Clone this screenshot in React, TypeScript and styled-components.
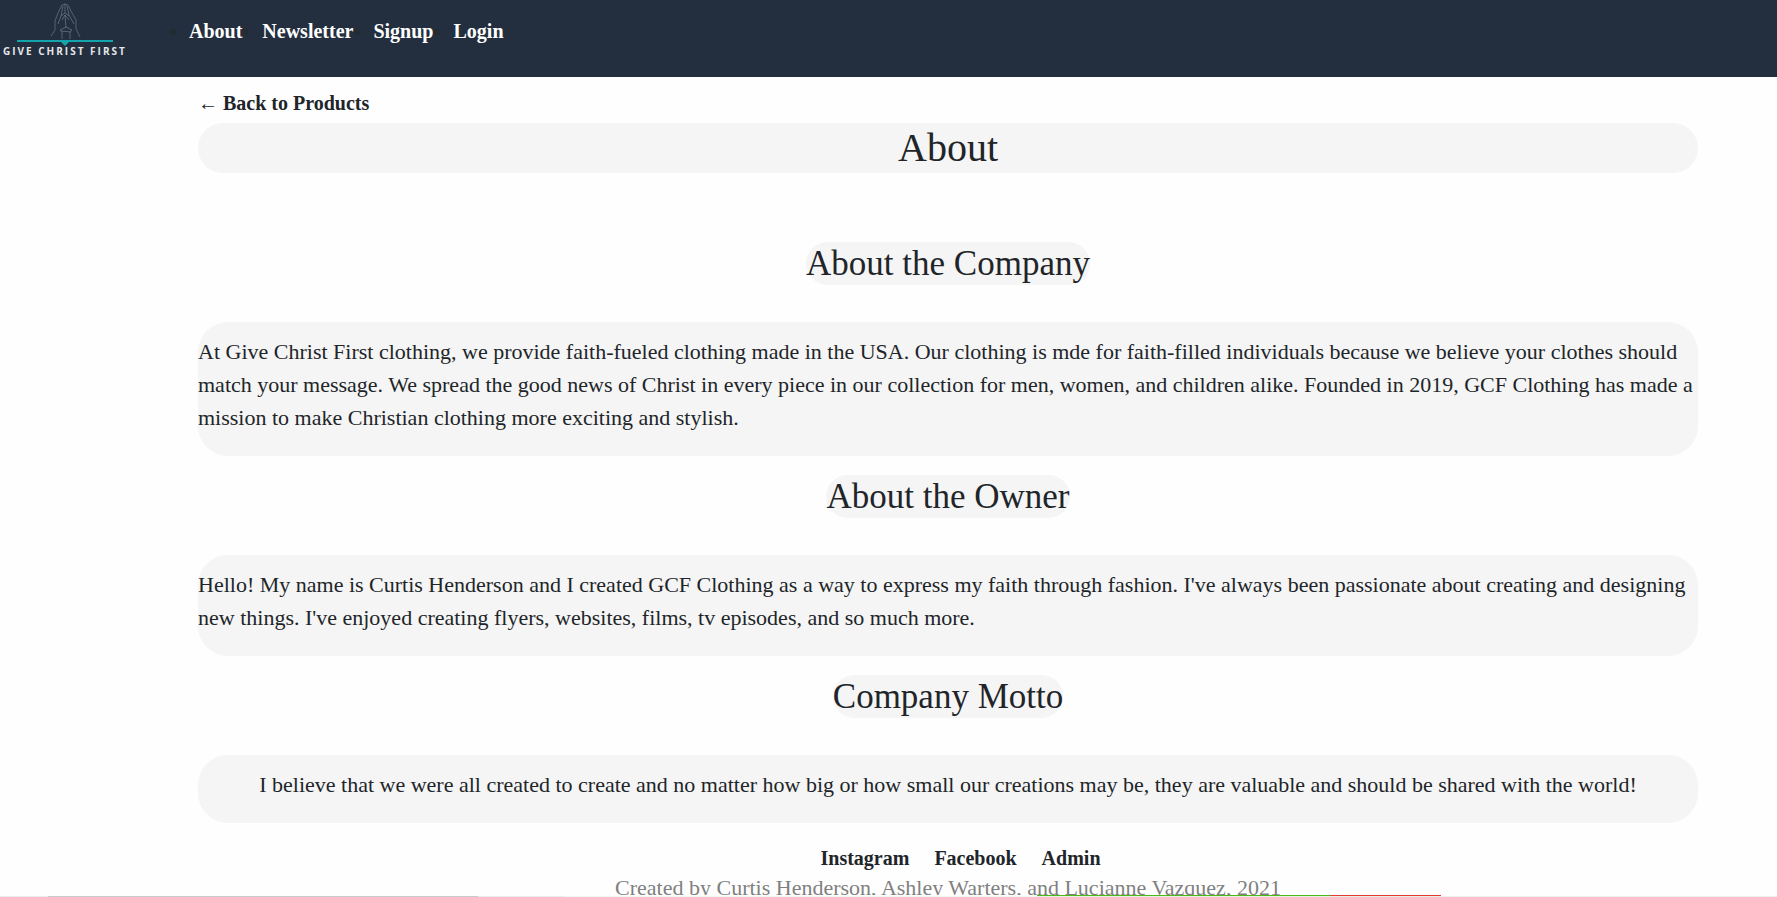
import React from "react";
import styled, { createGlobalStyle } from "styled-components";

const GlobalStyle = createGlobalStyle`
  *, *::before, *::after { box-sizing: border-box; }
  html { overflow: hidden; }
  body {
    margin: 0;
    background: #fefefe;
    color: #212529;
    font: 22px/33px "Liberation Serif", "Times New Roman", serif;
  }
`;

const Header = styled.header`
  display: flex;
  align-items: flex-start;
  height: 77px;
  background: #232f3e;
`;

const LogoLink = styled.a`
  display: block;
  width: 132px;
  height: 60px;
  flex: none;
`;

const NavList = styled.ul`
  display: flex;
  gap: 20px;
  margin: 0;
  padding: 16px 0 0 57px;
  font-size: 20px;
  line-height: 30px;

  li::marker {
    color: #242b32;
  }
`;

const TextLink = styled.a<{ $light?: boolean }>`
  color: ${({ $light }) => ($light ? "#ffffff" : "#212529")};
  font-size: 20px;
  line-height: 30px;
  font-weight: 700;
  text-decoration: none;
`;

const Arrow = styled.span`
  font-weight: 400;
`;

const Main = styled.main`
  display: flex;
  flex-direction: column;
  align-items: center;
  padding: 10px 79px 0 198px;
`;

const BackRow = styled.div`
  align-self: stretch;
  font-size: 20px;
  line-height: 33px;
  padding-bottom: 3px;
`;

const PageTitle = styled.h1`
  align-self: stretch;
  margin: 0 0 69px;
  border-radius: 25px;
  background: #f5f5f5;
  font-size: 40px;
  line-height: 50px;
  font-weight: 400;
  text-align: center;
`;

const SectionTitle = styled.h2`
  margin: 0 0 37px;
  border-radius: 25px;
  background: #f5f5f5;
  font-size: 35px;
  line-height: 43px;
  font-weight: 400;
`;

const Panel = styled.p<{ $centered?: boolean }>`
  align-self: stretch;
  margin: 0 0 19px;
  padding: 13px 0 22px;
  border-radius: 30px;
  background: #f5f5f5;
  text-align: ${({ $centered }) => ($centered ? "center" : "left")};
`;

const Footer = styled.footer`
  display: flex;
  flex-direction: column;
  align-items: center;
  padding: 1px 79px 0 198px;
`;

const FooterLinks = styled.nav`
  display: flex;
  gap: 25px;
  height: 28px;
  padding-left: 25px;
`;

const Credit = styled.p`
  margin: 0;
  color: #808080;
`;

const BottomStrip = styled.div`
  position: fixed;
  inset: auto 0 0;
  height: 2px;
  display: flex;
  align-items: flex-end;
  background: #fefefe;
`;

const StripPart = styled.span<{ $size: number; $color: string; $tall?: boolean }>`
  flex: ${({ $size }) => $size} 1 0;
  height: ${({ $tall }) => ($tall ? 2 : 1)}px;
  background: ${({ $color, $tall }) =>
    $tall ? `linear-gradient(${$color} 50%, #e6f0e2 50%)` : $color};
`;

const Logo = () => (
  <svg width="132" height="60" viewBox="0 0 132 60" role="img" aria-label="Give Christ First">
    <g fill="none" stroke="#8a939c" strokeWidth="0.7" opacity="0.75">
      <path d="M51 36 L55 30 L55 21 L58 13 L62 5 L65 4 L68 5 L72 13 L76 20 L76 29 L80 37" />
      <path d="M65 4 L65 13 M63 6 L61 16 L58 24 M67 6 L69 15 L74 24 M61 16 L65 13 L69 16 M62 20 L65 15 L69 20 M65 15 L66 28" />
      <path d="M62 39 L62 32 L60 30 L66 27 L72 30 L70 32 L70 39 M61 31 L71 32" />
    </g>
    <path d="M17 40H113V42H69L65 46L61 42H17Z" fill="#12a5ae" />
    <text x="3" y="55" fill="#e3e6e9" fontFamily="Open Sans, sans-serif" fontSize="10" fontWeight="700" letterSpacing="2">
      GIVE CHRIST FIRST
    </text>
  </svg>
);

const navItems = ["About", "Newsletter", "Signup", "Login"];
const footerItems = ["Instagram", "Facebook", "Admin"];

const sections = [
  {
    title: "About the Company",
    text: "At Give Christ First clothing, we provide faith-fueled clothing made in the USA. Our clothing is mde for faith-filled individuals because we believe your clothes should match your message. We spread the good news of Christ in every piece in our collection for men, women, and children alike. Founded in 2019, GCF Clothing has made a mission to make Christian clothing more exciting and stylish.",
  },
  {
    title: "About the Owner",
    text: "Hello! My name is Curtis Henderson and I created GCF Clothing as a way to express my faith through fashion. I've always been passionate about creating and designing new things. I've enjoyed creating flyers, websites, films, tv episodes, and so much more.",
  },
  {
    title: "Company Motto",
    text: "I believe that we were all created to create and no matter how big or how small our creations may be, they are valuable and should be shared with the world!",
    centered: true,
  },
];

const strip = [
  { size: 48, color: "#ebebeb" },
  { size: 430, color: "#c9c9c9" },
  { size: 86, color: "#ebebeb" },
  { size: 473, color: "#f3f5f2" },
  { size: 293, color: "#4bb816", tall: true },
  { size: 111, color: "#e23b32", tall: true },
  { size: 336, color: "#f1efee" },
];

export default function App() {
  return (
    <>
      <GlobalStyle />
      <Header>
        <LogoLink href="#home">
          <Logo />
        </LogoLink>
        <nav aria-label="Main">
          <NavList>
            {navItems.map((item) => (
              <li key={item}>
                <TextLink $light href={`#${item.toLowerCase()}`}>
                  {item}
                </TextLink>
              </li>
            ))}
          </NavList>
        </nav>
      </Header>
      <Main>
        <BackRow>
          <TextLink href="#products">
            <Arrow>←</Arrow> Back to Products
          </TextLink>
        </BackRow>
        <PageTitle>About</PageTitle>
        {sections.map(({ title, text, centered }) => (
          <React.Fragment key={title}>
            <SectionTitle>{title}</SectionTitle>
            <Panel $centered={centered}>{text}</Panel>
          </React.Fragment>
        ))}
      </Main>
      <Footer>
        <FooterLinks aria-label="Footer">
          {footerItems.map((item) => (
            <TextLink key={item} href={`#${item.toLowerCase()}`}>
              {item}
            </TextLink>
          ))}
        </FooterLinks>
        <Credit>Created by Curtis Henderson, Ashley Warters, and Lucianne Vazquez, 2021</Credit>
      </Footer>
      <BottomStrip aria-hidden="true">
        {strip.map(({ size, color, tall }, index) => (
          <StripPart key={index} $size={size} $color={color} $tall={tall} />
        ))}
      </BottomStrip>
    </>
  );
}
